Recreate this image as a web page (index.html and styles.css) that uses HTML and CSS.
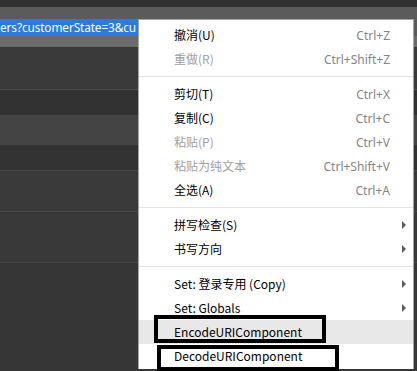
FILE: index.html
```html
<!DOCTYPE html>
<html>
<head>
<meta charset="utf-8">
<link rel="stylesheet" href="styles.css">
</head>
<body>
<div class="page">
  <div class="bg">
    <div class="band topbar"></div>
    <div class="band toolbar"></div>
    <div class="band addr"><span class="sel">ers?customerState=3&amp;cu</span></div>
    <div class="band under"></div>
    <div class="band r1"></div>
    <div class="band r2"></div>
    <div class="band r3"></div>
    <div class="band r4"></div>
    <div class="band r5"></div>
    <div class="band r6"></div>
    <div class="band r7"></div>
  </div>

  <div class="menu">
    <div class="item"><span class="label">撤消(U)</span><span class="key">Ctrl+Z</span></div>
    <div class="item disabled"><span class="label">重做(R)</span><span class="key">Ctrl+Shift+Z</span></div>
    <div class="sep"></div>
    <div class="item"><span class="label">剪切(T)</span><span class="key">Ctrl+X</span></div>
    <div class="item"><span class="label">复制(C)</span><span class="key">Ctrl+C</span></div>
    <div class="item disabled"><span class="label">粘贴(P)</span><span class="key">Ctrl+V</span></div>
    <div class="item disabled"><span class="label">粘贴为纯文本</span><span class="key">Ctrl+Shift+V</span></div>
    <div class="item"><span class="label">全选(A)</span><span class="key">Ctrl+A</span></div>
    <div class="sep"></div>
    <div class="item"><span class="label">拼写检查(S)</span><span class="arrow"></span></div>
    <div class="item"><span class="label">书写方向</span><span class="arrow"></span></div>
    <div class="sep"></div>
    <div class="item"><span class="label">Set: 登录专用 (Copy)</span><span class="arrow"></span></div>
    <div class="item"><span class="label">Set: Globals</span><span class="arrow"></span></div>
    <div class="item hover"><span class="label">EncodeURIComponent</span></div>
    <div class="item"><span class="label">DecodeURIComponent</span></div>
  </div>

  <div class="mark mark-encode"></div>
  <div class="mark mark-decode"></div>
</div>
</body>
</html>
```

FILE: styles.css
```css
html, body {
  margin: 0;
  padding: 0;
}
body {
  width: 417px;
  height: 371px;
  overflow: hidden;
  background: #363636;
  font-family: "Noto Sans CJK SC", "Noto Sans", sans-serif;
}
.page {
  position: relative;
  width: 417px;
  height: 371px;
}
.bg {
  display: flex;
  flex-direction: column;
}
.band { flex: none; }
.topbar { height: 7px; background: #303030; }
.toolbar { height: 12px; background: #5b5b5b; }
.addr {
  height: 17px;
  background: #5b5b5b;
  display: flex;
  align-items: stretch;
}
.sel {
  width: 138px;
  background: #2a7ae2;
  color: #fff;
  font-family: "Noto Sans", sans-serif;
  font-size: 11.8px;
  letter-spacing: -0.1px;
  line-height: 17px;
  white-space: nowrap;
  overflow: hidden;
}
.under { height: 11px; background: #6b6b6b; }
.r1 { height: 42px; background: #3a3a3a; border-bottom: 1px solid #4a4a4a; }
.r2 { height: 25px; background: #323232; }
.r3 { height: 30px; background: #444444; }
.r4 { height: 25px; background: #333333; border-bottom: 1px solid #474747; }
.r5 { height: 40px; background: #3a3a3a; border-bottom: 1px solid #474747; }
.r6 { height: 50px; background: #393939; border-bottom: 1px solid #474747; }
.r7 { flex: 1; background: #353535; }

.menu {
  position: absolute;
  left: 138px;
  top: 19px;
  width: 274px;
  padding: 3px 0 0;
  background: #fff;
  border: 1px solid #a3a3a3;
  border-bottom: none;
  height: 346px;
  font-size: 12px;
  color: #000;
}
.item {
  height: 24px;
  display: flex;
  align-items: center;
  padding-left: 35px;
  padding-right: 23px;
  position: relative;
}
.item .label {
  flex: 1;
  white-space: nowrap;
  line-height: 24px;
}
.item .key {
  color: #858585;
  font-family: "Noto Sans", sans-serif;
  font-size: 12px;
}
.item.disabled .label { color: #a0a0a0; }
.item.hover { background: #e8e8e8; }
.arrow {
  position: absolute;
  right: 7px;
  top: 8px;
  width: 0;
  height: 0;
  border-top: 4px solid transparent;
  border-bottom: 4px solid transparent;
  border-left: 4px solid #5a5a5a;
}
.sep {
  height: 11px;
  display: flex;
  align-items: center;
}
.sep::before {
  content: "";
  display: block;
  flex: 1;
  height: 1px;
  background: #e3e3e3;
}

.mark {
  position: absolute;
  border: 4px solid #000;
  box-sizing: border-box;
}
.mark-encode {
  left: 154px;
  top: 315px;
  width: 172px;
  height: 28px;
}
.mark-decode {
  left: 157px;
  top: 345px;
  width: 182px;
  height: 26px;
}
```
